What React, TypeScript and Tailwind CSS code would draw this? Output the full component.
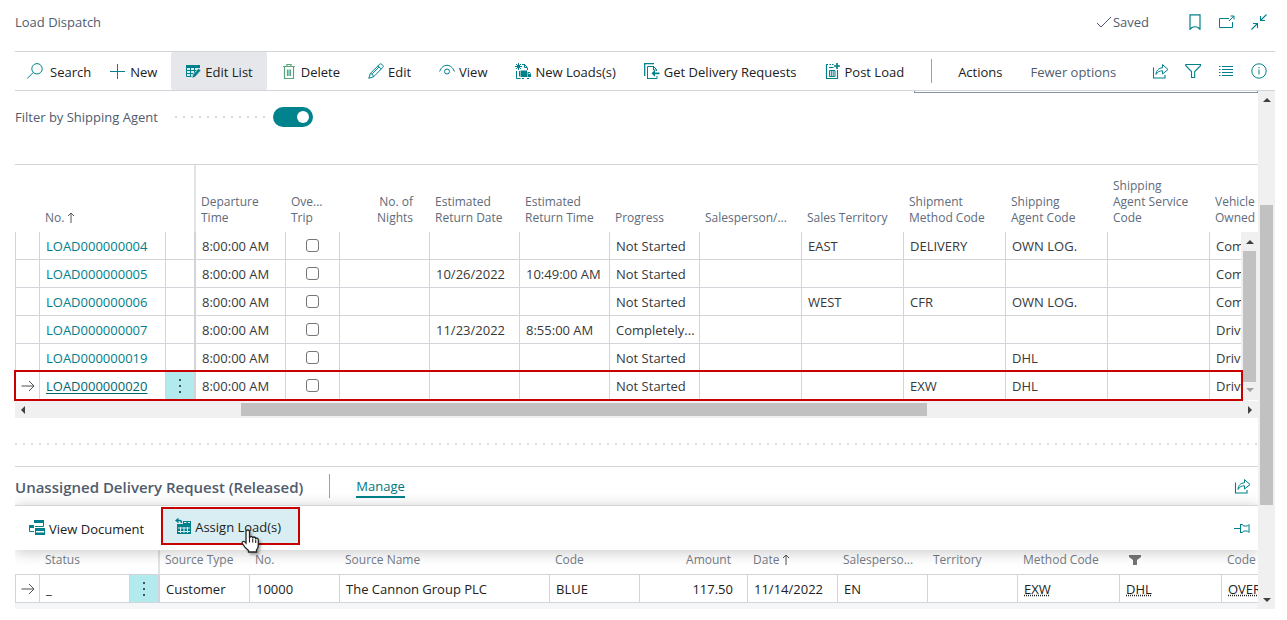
import React from "react";

type IconProps = { children: React.ReactNode; w?: number; h?: number; label?: string };

function Svg({ children, w = 16, h = 16 }: IconProps) {
  return (
    <svg width={w} height={h} viewBox={`0 0 ${w} ${h}`} fill="none" stroke="#00808a" strokeWidth="1" className="shrink-0" aria-hidden="true">
      {children}
    </svg>
  );
}

const SearchIcon = () => (
  <Svg w={18}>
    <circle cx="11" cy="5.8" r="5.2" />
    <path d="M7.2 9.6 1.2 15.4" />
  </Svg>
);
const PlusIcon = () => (
  <Svg>
    <path d="M7.500 1v15M0 8.500h15" />
  </Svg>
);
const EditListIcon = () => (
  <Svg>
    <path d="M1 2h14v3H1z" fill="#00808a" stroke="none" />
    <path d="M1.5 2.5h13v2M1.5 5v8.500h5M1.500 7.500h10M1.500 10.500h7M5.500 5v8.500M9.500 5v5" />
    <path d="m7 15 .8-3.200 5.700-6.300 2.300 2-5.800 6.500z" fill="#00808a" stroke="#e5e7ea" strokeWidth=".5" />
  </Svg>
);
const TrashIcon = () => (
  <Svg>
    <path d="M2 3.500h12M6 3V1.500h4V3M3.500 4v11.500h9V4M6.500 6.500v6.500M9.500 6.500v6.500" stroke="#5aa57c" strokeWidth="1.200" />
    <path d="M8 6.500v6.500" strokeWidth=".8" />
  </Svg>
);
const PencilIcon = () => (
  <Svg>
    <path d="m.8 15.300 1.500-4.800L11.500 1.300q1-1 2.300 0l1 1q1 1.200 0 2.200l-9.200 9.200zM10 2.800l3.300 3.300M2.300 10.500q2.800.2 3.300 3.200M4.300 10.800l7-7" />
  </Svg>
);
const EyeIcon = () => (
  <Svg>
    <path d="M.6 8.500C2.300 4.200 5 2.300 8 2.300s5.700 1.900 7.400 6.200" />
    <circle cx="8" cy="8.500" r="2.500" />
  </Svg>
);
const NewLoadIcon = () => (
  <Svg>
    <path d="M3.500 0v7M0 3.500h7M1 1l5 5M6 1 1 6M7 1.500h2.500l3 3M9.500 1v3.500H12M1.500 8v7.500h4M4.500 8v5.500M12.500 5v2" />
    <path d="M5.500 7.500h6.500V14H5.500zM12.500 9h2.500l1 2.500V14h-3.500z" fill="#00808a" stroke="none" />
    <path d="M7 15.500h2M12 15.500h2" />
    <path d="M13.500 10.500h1.500" stroke="#fff" />
  </Svg>
);
const GetRequestsIcon = () => (
  <Svg>
    <path d="M.7 13V.7h9.300" strokeWidth="1.300" />
    <path d="M3.500 15.500V3.500h6l3 3V8M9.500 3v4h3.500M3 15.500h10V13" />
    <path d="m7.500 10.300 3.500-3.300v2.400h4.500v1.900H11v2.400z" fill="#00808a" stroke="none" />
  </Svg>
);
const PostIcon = () => (
  <Svg>
    <path d="M3 1.500H1.500v14h11V7M4.500 1.500h1.500M7 1.500h1.500M4 4.500h4.500" strokeWidth="1.200" />
    <path d="M4.500 7.500h5.500v6H4.500zM6.300 7.500v6M8.200 7.500v6" />
    <path d="M12 0v6M9 3h6" strokeWidth="1.700" />
  </Svg>
);
const ShareIcon = () => (
  <Svg w={17}>
    <path d="M1.500 4.500v10.500h11.500V12" strokeWidth="1.100" />
    <path d="M4 11.500c.3-4 2.500-6.500 6.500-6.700V1.500l5.500 5-5.500 4.500V7.800c-3 0-5 1-6.500 3.700z" />
  </Svg>
);
const FilterIcon = () => (
  <Svg>
    <path d="M.8 1.500h14.700v1.200L9.700 8.500v6H6.500v-6L.8 2.700z" strokeWidth="1.100" />
  </Svg>
);
const ListIcon = () => (
  <Svg>
    <path d="M1 3.500h1.500M4 3.500h11M1 6.500h1.500M4 6.500h11M1 9.500h1.500M4 9.500h11M1 12.500h1.500M4 12.500h11" />
  </Svg>
);
const InfoIcon = () => (
  <Svg>
    <circle cx="8" cy="8" r="7.200" />
    <path d="M8 6.500v5M8 4v1.300" />
  </Svg>
);
const BookmarkIcon = () => (
  <Svg>
    <path d="M3 .8h10v14.500L11 13.500q-3-1.500-6 0l-2 1.800z" strokeWidth="1.200" />
  </Svg>
);
const PopoutIcon = () => (
  <Svg>
    <path d="M10 4.500H.5v9h13V8" />
    <path d="m10 7 5-5M11.500 2H15v3.500" />
  </Svg>
);
const CollapseIcon = () => (
  <Svg>
    <path d="M15.500.5 9.500 6.500M9.500 2v4.500H14M.5 15.500l6-6M2 9.500h4.500V14" strokeWidth="1.100" />
  </Svg>
);
const CheckIcon = () => (
  <svg width="16" height="16" viewBox="0 0 16 16" fill="none" stroke="#505c6d" className="mr-px" aria-hidden="true">
    <path d="m1 9 4 4L15 3" />
  </svg>
);
const ViewDocIcon = () => (
  <Svg>
    <path d="M5 0h10v3H5zM6 8h10v3H6zM6 12.500h10V15H6zM0 5h5v3H0z" fill="#00808a" stroke="none" />
    <path d="M14.500 3v3.500H6M.5 8v3.500H5M6.500 10v4M15.500 10v4" />
  </Svg>
);
const AssignIcon = () => (
  <Svg>
    <path d="M1 2.500h4q1.500 0 1.500 2.500M3.500.5l-2.500 2 2.500 2" strokeWidth="1.400" />
    <path d="M2 6h14v10H2zM8 3h8v3H8z" fill="#00808a" stroke="none" />
    <path d="M3 10h12M3 13.500h12M5.500 9v6M9 9v6M12.500 9v6M9 4.500h2.500M13 4.500h2" stroke="#d9eef2" />
  </Svg>
);
const PinIcon = () => (
  <Svg>
    <path d="M0 8.500h6M6.500 4v9M6.500 4.500h2l1 1.500h4l1.500-1.500v8L13.500 11h-4l-1 1.500h-2" />
  </Svg>
);
const RowArrow = () => (
  <svg width="14" height="12" viewBox="0 0 14 12" fill="none" stroke="#505050" className="mx-auto block" aria-hidden="true">
    <path d="M0.500 6h12.500M8 1l5 5-5 5" />
  </svg>
);
const SortArrow = () => (
  <svg width="8" height="11" viewBox="0 0 8 11" fill="none" stroke="#555" className="ml-[3px] inline-block align-[-1px]" aria-hidden="true">
    <path d="M4 11V1M1 4l3-3 3 3" />
  </svg>
);
const Dots = () => (
  <svg width="2" height="14" viewBox="0 0 2 14" fill="#3b5560" className="mx-auto block" aria-hidden="true">
    <path d="M0 0h2v2H0zM0 6h2v2H0zM0 12h2v2H0z" />
  </svg>
);
const SolidFilter = () => (
  <svg width="12" height="10" viewBox="0 0 12 10" fill="#757575" className="ml-1 inline-block align-[-1px]" aria-label="Filtered">
    <path d="M0 0h12v2L8 5v5H4V5L0 2z" />
  </svg>
);

function Caret({ dir, dim }: { dir: "up" | "down" | "left" | "right"; dim?: boolean }) {
  const d = {
    up: "M0 6l4-4 4 4z",
    down: "M0 2l4 4 4-4z",
    left: "M6 0L2 4l4 4z",
    right: "M2 0l4 4-4 4z",
  }[dir];
  return (
    <svg width="8" height="8" viewBox="0 0 8 8" fill={dim ? "#a0a0a0" : "#404040"} className="shrink-0" aria-hidden="true">
      <path d={d} />
    </svg>
  );
}

type ActionProps = { icon: React.ReactNode; label: string; className?: string };
function Action({ icon, label, className = "pl-3 pr-[14px]" }: ActionProps) {
  return (
    <button className={`flex h-full items-center gap-[2px] whitespace-nowrap ${className}`}>
      <span className="flex w-5 shrink-0 justify-center">{icon}</span>
      <span className="pt-px">{label}</span>
    </button>
  );
}

function IconButton({ label, children }: { label: string; children: React.ReactNode }) {
  return (
    <button aria-label={label} className="flex w-4 justify-center">
      {children}
    </button>
  );
}

const loads = [
  { no: "LOAD000000004", rd: "", rt: "", progress: "Not Started", terr: "EAST", method: "DELIVERY", agent: "OWN LOG.", owner: "Company" },
  { no: "LOAD000000005", rd: "10/26/2022", rt: "10:49:00 AM", progress: "Not Started", terr: "", method: "", agent: "", owner: "Company" },
  { no: "LOAD000000006", rd: "", rt: "", progress: "Not Started", terr: "WEST", method: "CFR", agent: "OWN LOG.", owner: "Company" },
  { no: "LOAD000000007", rd: "11/23/2022", rt: "8:55:00 AM", progress: "Completely...", terr: "", method: "", agent: "", owner: "Driver" },
  { no: "LOAD000000019", rd: "", rt: "", progress: "Not Started", terr: "", method: "", agent: "DHL", owner: "Driver" },
  { no: "LOAD000000020", rd: "", rt: "", progress: "Not Started", terr: "", method: "EXW", agent: "DHL", owner: "Driver", active: true },
];

const loadHeads: string[][] = [
  ["Ove...", "Trip"],
  ["No. of", "Nights"],
  ["Estimated", "Return Date"],
  ["Estimated", "Return Time"],
  ["Progress"],
  ["Salesperson/..."],
  ["Sales Territory"],
  ["Shipment", "Method Code"],
  ["Shipping", "Agent Code"],
  ["Shipping", "Agent Service", "Code"],
  ["Vehicle", "Owned By"],
];

const thBase = "overflow-hidden whitespace-nowrap pb-[6px] align-bottom font-normal";
const th = `${thBase} pl-[6px] text-left`;
const thFrozen = `${thBase} pl-[5px] text-left`;
const thRight = `${thBase} pr-4 text-right`;
const td = "overflow-hidden whitespace-nowrap border-b border-l border-[#d2d4d9] pl-[6px]";

function LoadsTable() {
  return (
    <table className="w-full table-fixed border-separate border-spacing-0 border-t border-[#d2d4d9]">
      <colgroup>
        <col className="w-[24px]" />
        <col className="w-[126px]" />
        <col className="w-[29px]" />
        <col className="w-[91px]" />
        <col className="w-[54px]" />
        <col className="w-[90px]" />
        <col className="w-[90px]" />
        <col className="w-[90px]" />
        <col className="w-[90px]" />
        <col className="w-[102px]" />
        <col className="w-[102px]" />
        <col className="w-[102px]" />
        <col className="w-[102px]" />
        <col className="w-[102px]" />
        <col />
      </colgroup>
      <thead className="text-[12px] leading-4 text-[#606b7b]">
        <tr className="h-[67px]">
          <th className={th} aria-label="Current row" />
          <th className={th}>
            No.
            <SortArrow />
          </th>
          <th className={th} aria-label="Row menu" />
          <th className={`${thFrozen} border-l-2 border-[#e2e3e6]`}>
            Departure
            <br />
            Time
          </th>
          {loadHeads.map((lines) => (
            <th key={lines.join(" ")} className={lines[0] === "No. of" ? thRight : th}>
              {lines.map((l) => (
                <span key={l} className="block">
                  {l}
                </span>
              ))}
            </th>
          ))}
        </tr>
      </thead>
      <tbody className="text-[13px] text-[#383838]">
        {loads.map((r) => (
          <tr key={r.no} className="h-7">
            <td className="border-b border-l border-[#d2d4d9]">{r.active && <RowArrow />}</td>
            <td className={td}>
              <a href="#load" className={r.active ? "text-[#00666e] underline underline-offset-2" : "text-[#00808a]"}>
                {r.no}
              </a>
            </td>
            <td className={r.active ? "border-b border-l border-[#d2d4d9] bg-[#b2eaed]" : td}>{r.active && <Dots />}</td>
            <td className="overflow-hidden whitespace-nowrap border-b border-l-2 border-[#d2d4d9] pl-[6px]">8:00:00 AM</td>
            <td className="border-b border-l border-[#d2d4d9]">
              <input
                type="checkbox"
                aria-label={`Overnight trip ${r.no}`}
                className="mx-auto block h-[13px] w-[13px] appearance-none rounded-[3px] border border-[#767676] bg-white"
              />
            </td>
            <td className={td} />
            <td className={td}>{r.rd}</td>
            <td className={td}>{r.rt}</td>
            <td className={td}>{r.progress}</td>
            <td className={td} />
            <td className={td}>{r.terr}</td>
            <td className={td}>{r.method}</td>
            <td className={td}>{r.agent}</td>
            <td className={td} />
            <td className={td}>{r.owner}</td>
          </tr>
        ))}
      </tbody>
    </table>
  );
}

function RequestsTable() {
  return (
    <table className="w-full table-fixed border-separate border-spacing-0">
      <colgroup>
        <col className="w-[24px]" />
        <col className="w-[90px]" />
        <col className="w-[29px]" />
        <col className="w-[91px]" />
        <col className="w-[90px]" />
        <col className="w-[210px]" />
        <col className="w-[90px]" />
        <col className="w-[108px]" />
        <col className="w-[90px]" />
        <col className="w-[90px]" />
        <col className="w-[90px]" />
        <col className="w-[102px]" />
        <col className="w-[102px]" />
        <col />
      </colgroup>
      <thead className="text-[12px] leading-4 text-[#757b85]">
        <tr className="h-[25px] [&>th]:border-b [&>th]:border-b-[#d2d4d9]">
          <th className={th} aria-label="Current row" />
          <th className={th}>Status</th>
          <th className={th} aria-label="Row menu" />
          <th className={`${thFrozen} border-l-2 border-l-[#e2e3e6]`}>Source Type</th>
          <th className={th}>No.</th>
          <th className={th}>Source Name</th>
          <th className={th}>Code</th>
          <th className={thRight}>Amount</th>
          <th className={th}>
            Date
            <SortArrow />
          </th>
          <th className={th}>Salesperso...</th>
          <th className={th}>Territory</th>
          <th className={th}>Method Code</th>
          <th className={th}>
            <SolidFilter />
          </th>
          <th className={th}>Code</th>
        </tr>
      </thead>
      <tbody className="text-[13px] text-[#212121]">
        <tr className="h-7">
          <td className="border-b border-l border-[#d2d4d9]">
            <RowArrow />
          </td>
          <td className={td}>_</td>
          <td className="border-b border-l border-[#d2d4d9] bg-[#b2eaed]">
            <Dots />
          </td>
          <td className="overflow-hidden whitespace-nowrap border-b border-l-2 border-[#d2d4d9] pl-[6px]">Customer</td>
          <td className={td}>10000</td>
          <td className={td}>The Cannon Group PLC</td>
          <td className={td}>BLUE</td>
          <td className={`${td} pr-[14px] text-right`}>117.50</td>
          <td className={td}>11/14/2022</td>
          <td className={td}>EN</td>
          <td className={td} />
          <td className={`${td} underline decoration-dotted`}>EXW</td>
          <td className={`${td} underline decoration-dotted`}>DHL</td>
          <td className={`${td} underline decoration-dotted`}>OVERNIGHT</td>
        </tr>
      </tbody>
    </table>
  );
}

function HandCursor() {
  return (
    <svg width="20" height="25" viewBox="0 0 20 25" className="pointer-events-none absolute left-[79px] top-[23px] drop-shadow-[2px_2px_1px_rgba(0,0,0,0.3)]" aria-hidden="true">
      <path
        d="M6 14V3q0-2 1.800-2t1.700 2v6q0-1.500 1.600-1.500T12.700 9q.3-1.200 1.600-1T15.700 10q.2-1 1.400-.8T18.300 11v5q0 3-1.800 5v2H8.500v-1.500Q5 19 2.300 14.500 1.800 13 3 12.500t3 1.500z"
        fill="#fff"
        stroke="#222"
        strokeWidth="1.300"
      />
      <path d="M9.500 9v4.500M12.700 9.500v4M15.700 10.500v3.500" stroke="#222" strokeWidth="1.100" />
    </svg>
  );
}

export default function App() {
  return (
    <div className="flex flex-col bg-white pr-3 font-['Open_Sans','Noto_Sans',sans-serif] text-[13px] leading-5 text-[#212121]">
      <header className="ml-[15px] flex h-[51px] items-center justify-between pb-[7px] text-[#505c6d]">
        <h1>Load Dispatch</h1>
        <div className="flex items-center pr-2">
          <CheckIcon />
          <span className="mr-[38px]">Saved</span>
          <div className="flex items-center gap-4">
            <IconButton label="Bookmark"><BookmarkIcon /></IconButton>
            <IconButton label="Open in new window"><PopoutIcon /></IconButton>
            <IconButton label="Collapse"><CollapseIcon /></IconButton>
          </div>
        </div>
      </header>

      <nav className="ml-[15px] flex h-10 items-center border-y border-[#d2d4d9] text-[13px]">
        <Action icon={<SearchIcon />} label="Search" className="pl-[10px] pr-[5px] [&>span:first-child]:mr-[3px]" />
        <Action icon={<PlusIcon />} label="New" />
        <Action icon={<EditListIcon />} label="Edit List" className="rounded-[2px] bg-[#e5e7ea] pl-3 pr-[14px]" />
        <Action icon={<TrashIcon />} label="Delete" />
        <Action icon={<PencilIcon />} label="Edit" />
        <Action icon={<EyeIcon />} label="View" />
        <Action icon={<NewLoadIcon />} label="New Loads(s)" />
        <Action icon={<GetRequestsIcon />} label="Get Delivery Requests" />
        <Action icon={<PostIcon />} label="Post Load" />
        <span className="ml-[13px] h-6 w-px bg-[#98a1ae]" />
        <button className="ml-[26px] pt-px">Actions</button>
        <button className="ml-[28px] whitespace-nowrap pt-px text-[#505c6d]">Fewer options</button>
        <div className="ml-auto flex items-center gap-[17px] pr-2">
          <IconButton label="Share"><ShareIcon /></IconButton>
          <IconButton label="Filter"><FilterIcon /></IconButton>
          <IconButton label="Show list"><ListIcon /></IconButton>
          <IconButton label="Details"><InfoIcon /></IconButton>
        </div>
      </nav>

      <div className="flex">
        <main className="ml-[15px] min-w-0 flex-1">
          <div className="ml-auto h-[2px] w-[344px] border-x border-b border-[#8791a0]" />
          <div className="flex h-[71px] items-start pt-[13px]">
            <div className="flex items-center">
              <span id="agent-filter" className="w-[160px] pt-px text-[#505c6d]">Filter by Shipping Agent</span>
              <span className="mr-[6px] h-[2px] w-[92px] bg-[linear-gradient(90deg,#d8dade_2px,transparent_2px)] bg-[length:8px_2px]" />
              <button role="switch" aria-checked="true" aria-labelledby="agent-filter" className="flex h-5 w-10 items-center justify-end rounded-full bg-[#00838c] pr-1">
                <span className="h-3 w-3 rounded-full bg-white" />
              </button>
            </div>
          </div>

          <section className="relative">
            <LoadsTable />
            <div className="absolute bottom-0 right-0 flex h-[168px] w-[17px] flex-col items-center justify-between bg-[#f0f0f0] py-[6px]">
              <Caret dir="up" />
              <span className="h-[131px] w-[13px] bg-[#c1c1c1]" />
              <Caret dir="down" dim />
            </div>
            <div className="pointer-events-none absolute -bottom-px -left-px right-[15px] h-[31px] border-2 border-[#c80000]" />
          </section>
          <div className="mt-px flex h-[17px] items-center justify-between bg-[#f0f0f0] px-1">
            <Caret dir="left" />
            <div className="flex flex-1 px-2">
              <span className="ml-[206px] h-[13px] w-[57%] bg-[#c1c1c1]" />
            </div>
            <Caret dir="right" />
          </div>

          <div className="mt-[25px] h-[2px] bg-[linear-gradient(90deg,#dcdde0_2px,transparent_2px)] bg-[length:8px_2px]" />

          <section className="mt-[21px] overflow-hidden border-t border-[#d2d4d9]">
            <div className="flex h-[38px] items-center pr-2">
              <h2 className="pt-px text-[15px] font-semibold text-[#505c6d]">Unassigned Delivery Request (Released)</h2>
              <span className="ml-[26px] h-6 w-px bg-[#98a1ae]" />
              <a href="#manage" className="ml-[26px] border-b-2 border-[#00808a] pt-px text-[#00757e]">Manage</a>
              <div className="ml-auto"><IconButton label="Share"><ShareIcon /></IconButton></div>
            </div>
            <div className="relative z-10 flex h-[45px] items-center border-t border-[#d2d4d9] bg-white pr-2 shadow-[0_2px_14px_rgba(0,0,0,0.22)]">
              <Action icon={<ViewDocIcon />} label="View Document" className="pl-3 pr-[17px]" />
              <div className="relative h-[39px] self-start pt-px">
                <Action icon={<AssignIcon />} label="Assign Load(s)" className="border-2 border-[#c80000] bg-[#d9eef2] pl-[10px] pr-[17px]" />
                <HandCursor />
              </div>
              <div className="ml-auto"><IconButton label="Pin"><PinIcon /></IconButton></div>
            </div>
            <RequestsTable />
            <div className="h-[6px] bg-[#f5f6f8]" />
          </section>
        </main>

        <div className="flex w-[17px] flex-col items-center bg-[#f0f0f0] py-[5px]">
          <Caret dir="up" />
          <span className="mt-[101px] h-[300px] w-[13px] bg-[#c1c1c1]" />
          <span className="mt-auto flex"><Caret dir="down" /></span>
        </div>
      </div>
    </div>
  );
}
